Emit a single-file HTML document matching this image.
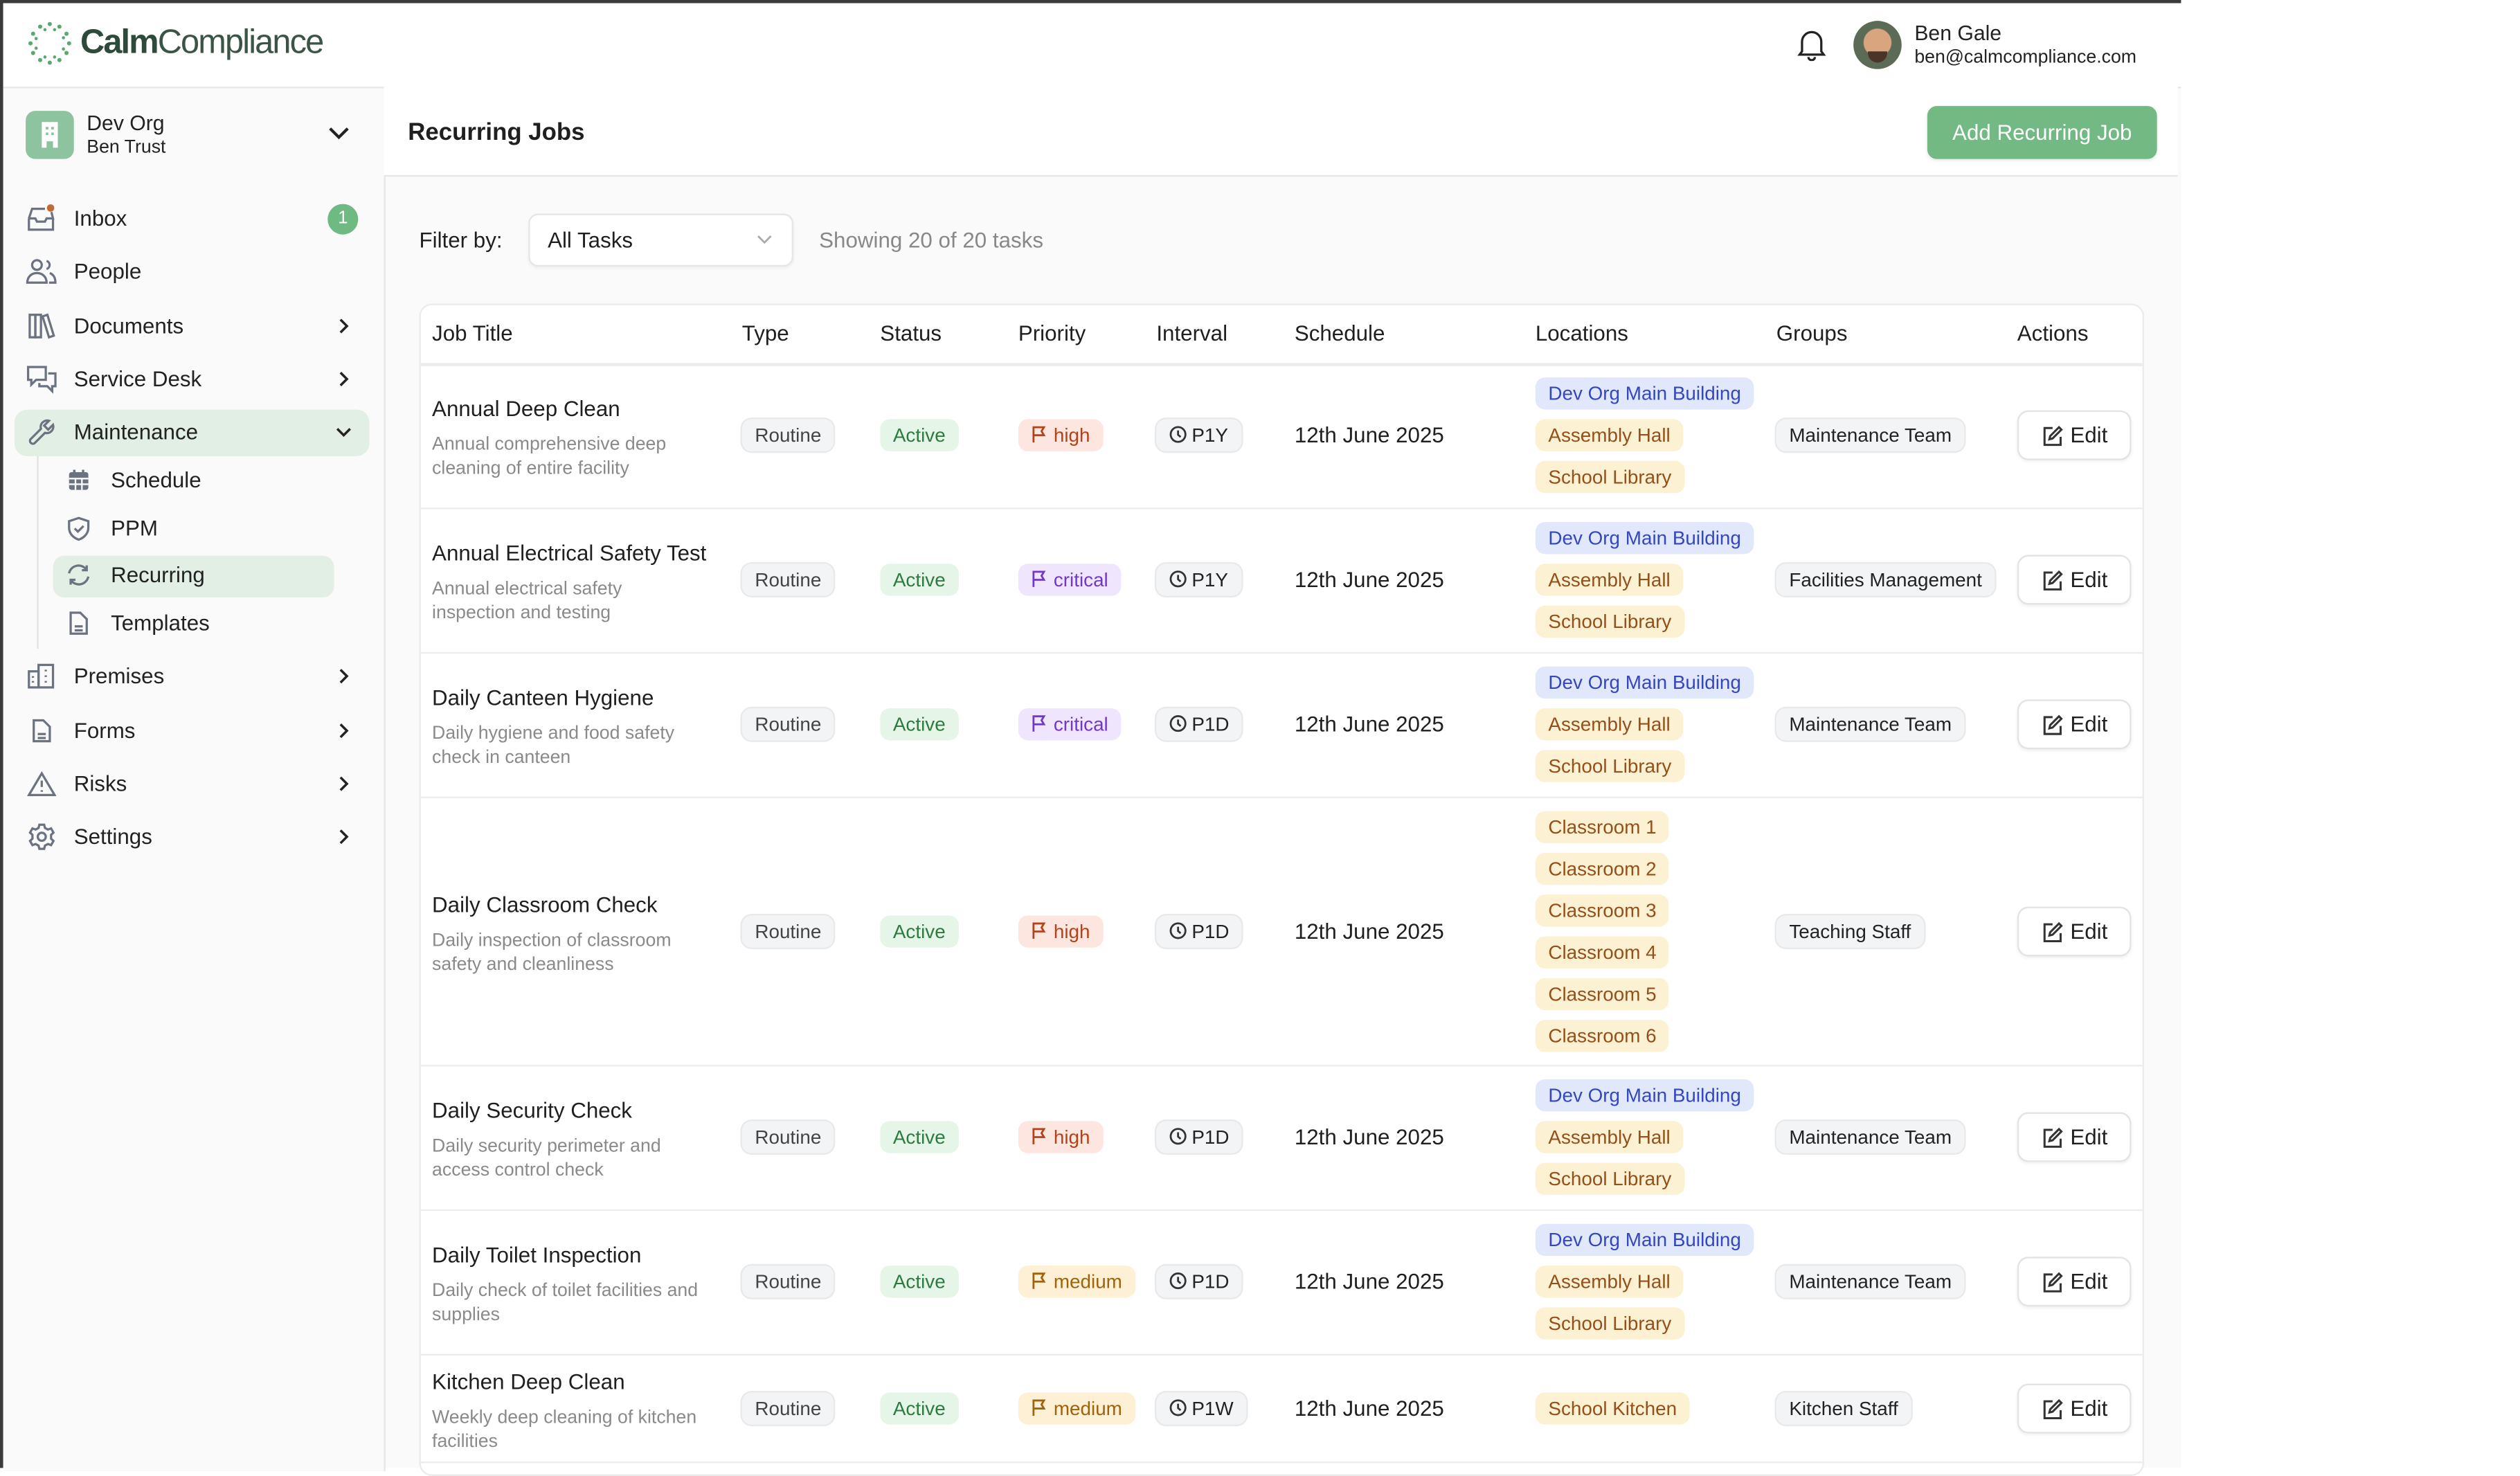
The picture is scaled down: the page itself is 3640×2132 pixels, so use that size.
<!DOCTYPE html>
<html><head><meta charset="utf-8"><style>
*{box-sizing:border-box;margin:0;padding:0}
html,body{width:3640px;height:2120px;overflow:hidden;background:#fff}
#stage{position:absolute;left:0;top:0;width:1569px;height:914px;transform:scale(2.3199);transform-origin:0 0;font-family:"Liberation Sans",sans-serif;color:#1f1f1f;background:#fff}
.a{position:absolute}
.app{position:absolute;left:0;top:0;width:1358px;height:914px;background:#fafafa;border-left:2px solid #3a3a3a;border-top:2px solid #3a3a3a}
.hdr{position:absolute;left:0;top:0;width:1356px;height:53px;background:#fff;border-bottom:1px solid #e6e6e6}
.side{position:absolute;left:0;top:53px;width:238px;height:861px;background:#fafafa;border-right:1px solid #e6e6e6}
.nav{position:absolute;left:46px;font-size:13.5px;color:#222;transform:translateY(-50%)}
.ico{position:absolute;transform:translate(-50%,-50%)}
.chev{position:absolute;left:209px;transform:translateY(-50%)}
.b{position:absolute;height:20px;line-height:20px;padding:0 8px;border-radius:6px;font-size:12px;white-space:nowrap;transform:translateY(-50%)}
.gray{background:#f3f4f6;color:#444;box-shadow:0 0 0 1px #e9e9ec}
.act{background:#e5f6e9;color:#2e7a3f}
.high{background:#fde6df;color:#b2431a}
.crit{background:#efe6fd;color:#7238c9}
.med{background:#fdf0d5;color:#a0620c}
.blue{background:#e1e8fb;color:#3447bf}
.yel{background:#fdf1d3;color:#93501a}
.tt{position:absolute;left:269px;font-size:13.5px;color:#1f1f1f}
.ds{position:absolute;left:269px;font-size:11.5px;color:#8a8a8a;line-height:15px;width:185px}
.sch{position:absolute;left:806px;font-size:13.5px;transform:translateY(-50%)}
.edit{position:absolute;left:1256px;width:71px;height:31px;border:1px solid #e3e3e3;border-radius:7px;background:#fff;box-shadow:0 1px 2px rgba(0,0,0,.06);transform:translateY(-50%);font-size:13.5px;line-height:29px;padding-left:32px}
.rl{position:absolute;left:262px;width:1072px;height:1px;background:#ececec}
</style></head><body><div id="stage">
<div class="app">
 <div class="hdr"></div>
 <div class="side"></div>
</div>
<svg class="a" style="left:16px;top:12px" width="30" height="30" viewBox="0 0 30 30">
 <g fill="#5aa870">
 <circle cx="15" cy="3" r="1.3"/><circle cx="21" cy="4.6" r="1.3"/><circle cx="25.4" cy="9" r="1.3"/><circle cx="27" cy="15" r="1.3"/><circle cx="25.4" cy="21" r="1.3"/><circle cx="21" cy="25.4" r="1.3"/><circle cx="15" cy="27" r="1.3"/><circle cx="9" cy="25.4" r="1.3"/><circle cx="4.6" cy="21" r="1.3"/><circle cx="3" cy="15" r="1.3"/><circle cx="4.6" cy="9" r="1.3"/><circle cx="9" cy="4.6" r="1.3"/>
 <circle cx="18" cy="6.5" r="1"/><circle cx="23.5" cy="11.5" r="1"/><circle cx="23.5" cy="18.5" r="1"/><circle cx="18" cy="23.5" r="1"/><circle cx="12" cy="23.5" r="1"/><circle cx="6.5" cy="18" r="1"/><circle cx="6.5" cy="12" r="1"/><circle cx="12" cy="6.5" r="1"/>
 </g></svg>
<div class="a" style="left:50px;top:15px;font-size:21px;color:#2d4a3a;letter-spacing:-0.8px"><span style="font-weight:600">Calm</span><span style="font-weight:normal;color:#3a5545">Compliance</span></div>
<svg class="a" style="left:1119px;top:18px" width="18" height="20" viewBox="0 0 18 20" fill="none" stroke="#222" stroke-width="1.4"><path d="M3 14V8a6 6 0 0 1 12 0v6l1.5 2h-15z"/><path d="M7 17.5a2 2 0 0 0 4 0"/></svg>
<div class="a" style="left:1154px;top:13px;width:30px;height:30px;border-radius:50%;background:radial-gradient(circle at 50% 45%,#d9a57e 0 38%,#5b6b55 40%);overflow:hidden"><div class="a" style="left:9px;top:19px;width:12px;height:7px;border-radius:0 0 6px 6px;background:#4a3528"></div></div>
<div class="a" style="left:1192px;top:13px;font-size:13px;color:#222">Ben Gale</div>
<div class="a" style="left:1192px;top:30px;font-size:11.5px;color:#222">ben@calmcompliance.com</div>

<div class="a" style="left:16px;top:69px;width:30px;height:30px;border-radius:6px;background:#8dc39e"></div>
<svg class="a" style="left:23px;top:75px" width="16" height="18" viewBox="0 0 16 18"><path d="M3 1h10v16h-3v-4H6v4H3z" fill="#fff"/><g fill="#8dc39e"><rect x="5.5" y="4" width="1.6" height="1.6"/><rect x="8.9" y="4" width="1.6" height="1.6"/><rect x="5.5" y="7.5" width="1.6" height="1.6"/><rect x="8.9" y="7.5" width="1.6" height="1.6"/></g></svg>
<div class="a" style="left:54px;top:69px;font-size:13px;color:#222">Dev Org</div>
<div class="a" style="left:54px;top:86px;font-size:11.5px;color:#222">Ben Trust</div>
<svg class="a" style="left:204px;top:78px" width="14" height="10" viewBox="0 0 14 10" fill="none" stroke="#222" stroke-width="1.8"><path d="M1.5 2l5.5 5.5L12.5 2"/></svg>

<div class="a" style="left:9px;top:255px;width:221px;height:29px;border-radius:8px;background:#e1efe4"></div>
<div class="a" style="left:23px;top:284px;width:1px;height:120px;background:#e3e3e3"></div>
<div class="a" style="left:33px;top:346px;width:175px;height:26px;border-radius:7px;background:#e1efe4"></div>
<div class="nav" style="top:136px">Inbox</div>
<div class="nav" style="top:169px">People</div>
<div class="nav" style="top:203px">Documents</div>
<div class="nav" style="top:236px">Service Desk</div>
<div class="nav" style="top:269px">Maintenance</div>
<div class="nav" style="top:299px;left:69px">Schedule</div>
<div class="nav" style="top:329px;left:69px">PPM</div>
<div class="nav" style="top:358px;left:69px">Recurring</div>
<div class="nav" style="top:388px;left:69px">Templates</div>
<div class="nav" style="top:421px">Premises</div>
<div class="nav" style="top:455px">Forms</div>
<div class="nav" style="top:488px">Risks</div>
<div class="nav" style="top:521px">Settings</div>
<div class="a" style="left:204px;top:127px;width:19px;height:19px;border-radius:50%;background:#6fba82;color:#fff;font-size:11px;text-align:center;line-height:19px">1</div>
<svg class="ico" style="left:26px;top:136px" width="20" height="18" viewBox="0 0 20 18" fill="none" stroke="#6b7280" stroke-width="1.4"><path d="M2 9l2-6h8M2 9v7h15V9M2 9h4l1 2h5l1-2h4l-1-4"/><circle cx="15.5" cy="2.5" r="2.3" fill="#c06a35" stroke="none"/></svg>
<svg class="ico" style="left:26px;top:169px" width="20" height="18" viewBox="0 0 20 18" fill="none" stroke="#6b7280" stroke-width="1.4"><circle cx="7" cy="5" r="3"/><path d="M1 16c0-4 3-6 6-6s6 2 6 6z"/><path d="M13 2.5a2.6 2.6 0 0 1 0 5M15 10c2 .8 3.5 2.5 3.5 6h-4"/></svg>
<svg class="ico" style="left:26px;top:203px" width="18" height="18" viewBox="0 0 18 18" fill="none" stroke="#6b7280" stroke-width="1.4"><rect x="1.5" y="2" width="3.5" height="14"/><rect x="5" y="2" width="3.5" height="14"/><path d="M9.5 3l3-1 4 13-3 1z"/></svg>
<svg class="ico" style="left:26px;top:236px" width="20" height="19" viewBox="0 0 20 19" fill="none" stroke="#6b7280" stroke-width="1.4"><path d="M1.5 2h11v8h-6l-3 3v-3h-2z"/><path d="M14 6h4.5v8h-2v3l-3-3h-5v-2"/></svg>
<svg class="ico" style="left:26px;top:269px" width="18" height="18" viewBox="0 0 18 18" fill="none" stroke="#6b7280" stroke-width="1.4"><path d="M16 4.5l-3 3-2.5-2.5 3-3a4 4 0 0 0-5 5L2 13.5a1.8 1.8 0 0 0 2.5 2.5L11 9.5a4 4 0 0 0 5-5z"/></svg>
<svg class="ico" style="left:49px;top:299px" width="14" height="14" viewBox="0 0 14 14"><rect x="1" y="2" width="12" height="11" rx="1.5" fill="#6b7280"/><path d="M1 6h12M5 6v7M9 6v7M1 9.5h12" stroke="#fafafa" stroke-width="1"/><rect x="3.5" y="0.5" width="1.5" height="3" fill="#6b7280"/><rect x="9" y="0.5" width="1.5" height="3" fill="#6b7280"/></svg>
<svg class="ico" style="left:49px;top:329px" width="15" height="16" viewBox="0 0 15 16" fill="none" stroke="#6b7280" stroke-width="1.4"><path d="M7.5 1.5L13.5 3.5v4c0 4-3 6.5-6 7.5-3-1-6-3.5-6-7.5v-4z"/><path d="M5 8l2 2 3.5-3.5"/></svg>
<svg class="ico" style="left:49px;top:358px" width="16" height="14" viewBox="0 0 16 14" fill="none" stroke="#6b7280" stroke-width="1.4"><path d="M2 6a6 6 0 0 1 11-2M13 1v3h-3M14 8a6 6 0 0 1-11 2M3 13v-3h3"/></svg>
<svg class="ico" style="left:49px;top:388px" width="13" height="16" viewBox="0 0 13 16" fill="none" stroke="#6b7280" stroke-width="1.4"><path d="M1.5 1.5h6l4 4v9h-10z"/><path d="M4 10h5M4 12.5h5"/></svg>
<svg class="ico" style="left:26px;top:421px" width="18" height="16" viewBox="0 0 18 16" fill="none" stroke="#6b7280" stroke-width="1.4"><rect x="1" y="5" width="6" height="10"/><rect x="7" y="1" width="9" height="14"/><path d="M3.5 8v1M3.5 11v1M11.5 4v1M11.5 7.5v1M11.5 11v1"/></svg>
<svg class="ico" style="left:26px;top:455px" width="13" height="16" viewBox="0 0 13 16" fill="none" stroke="#6b7280" stroke-width="1.4"><path d="M1.5 1.5h6l4 4v9h-10z"/><path d="M4 10h5M4 12.5h5"/></svg>
<svg class="ico" style="left:26px;top:488px" width="18" height="16" viewBox="0 0 18 16" fill="none" stroke="#6b7280" stroke-width="1.4"><path d="M9 1.5L17 15H1z"/><path d="M9 6v4M9 12v1"/></svg>
<svg class="ico" style="left:26px;top:521px" width="18" height="18" viewBox="0 0 18 18" fill="none" stroke="#6b7280" stroke-width="1.4"><path d="M7.5 1.5h3l.5 2 1.8 1 2-.7 1.5 2.6-1.5 1.4v2.4l1.5 1.4-1.5 2.6-2-.7-1.8 1-.5 2h-3l-.5-2-1.8-1-2 .7-1.5-2.6L3.2 10.2V7.8L1.7 6.4l1.5-2.6 2 .7 1.8-1z"/><circle cx="9" cy="9" r="2.5"/></svg>
<svg class="chev" style="top:203px" width="10" height="12" viewBox="0 0 10 12" fill="none" stroke="#222" stroke-width="1.5"><path d="M3 2l4 4-4 4"/></svg>
<svg class="chev" style="top:236px" width="10" height="12" viewBox="0 0 10 12" fill="none" stroke="#222" stroke-width="1.5"><path d="M3 2l4 4-4 4"/></svg>
<svg class="chev" style="top:269px;left:208px" width="12" height="10" viewBox="0 0 12 10" fill="none" stroke="#222" stroke-width="1.5"><path d="M2 3l4 4 4-4"/></svg>
<svg class="chev" style="top:421px" width="10" height="12" viewBox="0 0 10 12" fill="none" stroke="#222" stroke-width="1.5"><path d="M3 2l4 4-4 4"/></svg>
<svg class="chev" style="top:455px" width="10" height="12" viewBox="0 0 10 12" fill="none" stroke="#222" stroke-width="1.5"><path d="M3 2l4 4-4 4"/></svg>
<svg class="chev" style="top:488px" width="10" height="12" viewBox="0 0 10 12" fill="none" stroke="#222" stroke-width="1.5"><path d="M3 2l4 4-4 4"/></svg>
<svg class="chev" style="top:521px" width="10" height="12" viewBox="0 0 10 12" fill="none" stroke="#222" stroke-width="1.5"><path d="M3 2l4 4-4 4"/></svg>

<div class="a" style="left:239px;top:54px;width:1117px;height:56px;background:#fff;border-bottom:1px solid #e6e6e6"></div>
<div class="a" style="left:254px;top:74px;font-size:15px;font-weight:bold;color:#1f1f1f">Recurring Jobs</div>
<div class="a" style="left:1200px;top:66px;width:143px;height:33px;border-radius:6px;background:#72b983;color:#fff;font-size:13.5px;text-align:center;line-height:33px;box-shadow:0 1px 2px rgba(0,0,0,.1)">Add Recurring Job</div>

<div class="a" style="left:261px;top:142px;font-size:13.5px">Filter by:</div>
<div class="a" style="left:329px;top:133px;width:165px;height:33px;border-radius:6px;background:#fff;border:1px solid #e6e6e6;box-shadow:0 1px 2px rgba(0,0,0,.05)"></div>
<div class="a" style="left:341px;top:142px;font-size:13.5px">All Tasks</div>
<svg class="a" style="left:471px;top:146px" width="10" height="7" viewBox="0 0 10 7" fill="none" stroke="#aaa" stroke-width="1.2"><path d="M1 1l4 4 4-4"/></svg>
<div class="a" style="left:510px;top:142px;font-size:13.5px;color:#888">Showing 20 of 20 tasks</div>

<div class="a" style="left:261px;top:189px;width:1074px;height:730px;background:#fff;border:1px solid #ebebeb;border-radius:8px"></div>
<div class="a" style="top:200px;left:269px;font-size:13.5px">Job Title</div>
<div class="a" style="top:200px;left:462px;font-size:13.5px">Type</div>
<div class="a" style="top:200px;left:548px;font-size:13.5px">Status</div>
<div class="a" style="top:200px;left:634px;font-size:13.5px">Priority</div>
<div class="a" style="top:200px;left:720px;font-size:13.5px">Interval</div>
<div class="a" style="top:200px;left:806px;font-size:13.5px">Schedule</div>
<div class="a" style="top:200px;left:956px;font-size:13.5px">Locations</div>
<div class="a" style="top:200px;left:1106px;font-size:13.5px">Groups</div>
<div class="a" style="top:200px;left:1256px;font-size:13.5px">Actions</div>
<div class="rl" style="top:226px;height:2px"></div>
<div class="rl" style="top:316px"></div>
<div class="rl" style="top:406px"></div>
<div class="rl" style="top:496px"></div>
<div class="rl" style="top:663px"></div>
<div class="rl" style="top:753px"></div>
<div class="rl" style="top:843px"></div>
<div class="rl" style="top:910px"></div>

<div id="rows"></div>
<script>
var flag='<svg width="10" height="11" viewBox="0 0 10 11" fill="none" stroke="currentColor" stroke-width="1.2" style="vertical-align:-1px;margin-right:4px"><path d="M1.5 10.5V1h6.5l-1.5 2.5L8 6H1.5"/></svg>';
var clock='<svg width="11" height="11" viewBox="0 0 11 11" fill="none" stroke="#333" stroke-width="1.2" style="vertical-align:-1px;margin-right:3px"><circle cx="5.5" cy="5.5" r="4.6"/><path d="M5.5 3v2.7l1.6 1.4"/></svg>';
var pen='<svg width="14" height="14" viewBox="0 0 14 14" fill="none" stroke="#333" stroke-width="1.3" style="position:absolute;left:14px;top:8px"><path d="M7 2H2v10.5h10V7.5"/><path d="M11 1.5l1.5 1.5-5.5 5.5-2 .5.5-2z"/></svg>';
var std=['Dev Org Main Building|blue','Assembly Hall|yel','School Library|yel'];
var R=[
[271,'Annual Deep Clean',['Annual comprehensive deep','cleaning of entire facility'],'high','high','P1Y',std,'Maintenance Team'],
[361,'Annual Electrical Safety Test',['Annual electrical safety','inspection and testing'],'crit','critical','P1Y',std,'Facilities Management'],
[451,'Daily Canteen Hygiene',['Daily hygiene and food safety','check in canteen'],'crit','critical','P1D',std,'Maintenance Team'],
[580,'Daily Classroom Check',['Daily inspection of classroom','safety and cleanliness'],'high','high','P1D',['Classroom 1|yel','Classroom 2|yel','Classroom 3|yel','Classroom 4|yel','Classroom 5|yel','Classroom 6|yel'],'Teaching Staff'],
[708,'Daily Security Check',['Daily security perimeter and','access control check'],'high','high','P1D',std,'Maintenance Team'],
[798,'Daily Toilet Inspection',['Daily check of toilet facilities and','supplies'],'med','medium','P1D',std,'Maintenance Team'],
[877,'Kitchen Deep Clean',['Weekly deep cleaning of kitchen','facilities'],'med','medium','P1W',['School Kitchen|yel'],'Kitchen Staff']
];
var h='';
R.forEach(function(r){var c=r[0];
h+='<div class="tt" style="top:'+(c-24)+'px">'+r[1]+'</div>';
h+='<div class="ds" style="top:'+(c-1)+'px">'+r[2][0]+'<br>'+r[2][1]+'</div>';
h+='<div class="b gray" style="left:462px;top:'+c+'px">Routine</div>';
h+='<div class="b act" style="left:548px;top:'+c+'px">Active</div>';
h+='<div class="b '+r[3]+'" style="left:634px;top:'+c+'px">'+flag+r[4]+'</div>';
h+='<div class="b gray" style="left:720px;top:'+c+'px;color:#222">'+clock+r[5]+'</div>';
h+='<div class="sch" style="top:'+c+'px">12th June 2025</div>';
var n=r[6].length,s=c-(n-1)*13;
r[6].forEach(function(l,i){var p=l.split('|');h+='<div class="b '+p[1]+'" style="left:956px;top:'+(s+i*26)+'px">'+p[0]+'</div>';});
h+='<div class="b gray" style="left:1106px;top:'+c+'px;color:#222">'+r[7]+'</div>';
h+='<div class="edit" style="top:'+c+'px">'+pen+'Edit</div>';
});
document.getElementById('rows').innerHTML=h;
</script>
</div></body></html>
